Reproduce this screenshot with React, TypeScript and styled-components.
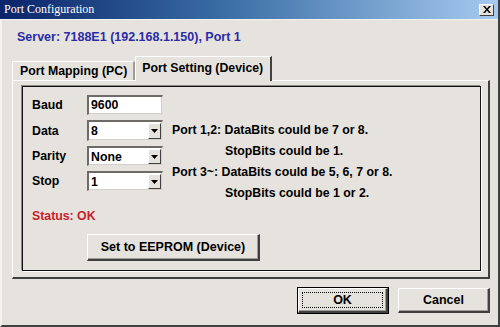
import styled, { createGlobalStyle } from "styled-components";

const GlobalStyle = createGlobalStyle`
  html, body {
    margin: 0;
    padding: 0;
    background: #e6e3de;
  }
  * {
    box-sizing: border-box;
  }
`;

const App = () => {
  return (
    <>
      <GlobalStyle />
      <Window>
        <TitleBar>
          <Title>Port Configuration</Title>
          <CloseButton aria-label="Close">
            <svg width="8" height="7" viewBox="0 0 8 7">
              <path d="M0 0h2l2 2.5L6 0h2L5 3.5 8 7H6L4 4.5 2 7H0l3-3.5z" fill="#000" />
            </svg>
          </CloseButton>
        </TitleBar>
        <Body>
          <ServerLine>Server: 7188E1 (192.168.1.150), Port 1</ServerLine>
          <TabStrip>
            <Tab>Port Mapping (PC)</Tab>
            <Tab $active>Port Setting (Device)</Tab>
          </TabStrip>
          <TabPanel>
            <GroupBox>
              <FormRow>
                <Fields>
                  <Label>Baud</Label>
                  <TextBox>9600</TextBox>
                  <Label>Data</Label>
                  <Combo>
                    <ComboValue>8</ComboValue>
                    <ComboArrow>
                      <svg width="7" height="4" viewBox="0 0 7 4">
                        <path d="M0 0h7L3.5 4z" fill="#000" />
                      </svg>
                    </ComboArrow>
                  </Combo>
                  <Label>Parity</Label>
                  <Combo>
                    <ComboValue>None</ComboValue>
                    <ComboArrow>
                      <svg width="7" height="4" viewBox="0 0 7 4">
                        <path d="M0 0h7L3.5 4z" fill="#000" />
                      </svg>
                    </ComboArrow>
                  </Combo>
                  <Label>Stop</Label>
                  <Combo>
                    <ComboValue>1</ComboValue>
                    <ComboArrow>
                      <svg width="7" height="4" viewBox="0 0 7 4">
                        <path d="M0 0h7L3.5 4z" fill="#000" />
                      </svg>
                    </ComboArrow>
                  </Combo>
                </Fields>
                <Notes>
                  <NoteLine>Port 1,2: DataBits could be 7 or 8.</NoteLine>
                  <NoteLine $indent>StopBits could be 1.</NoteLine>
                  <NoteLine>Port 3~: DataBits could be 5, 6, 7 or 8.</NoteLine>
                  <NoteLine $indent>StopBits could be 1 or 2.</NoteLine>
                </Notes>
              </FormRow>
              <Status>Status: OK</Status>
              <EepromButton>Set to EEPROM (Device)</EepromButton>
            </GroupBox>
          </TabPanel>
          <Footer>
            <DialogButton $default $width={90}>
              <FocusRing>OK</FocusRing>
            </DialogButton>
            <DialogButton $width={92}>Cancel</DialogButton>
          </Footer>
        </Body>
      </Window>
    </>
  );
};

const Window = styled.div`
  width: 500px;
  height: 327px;
  display: flex;
  flex-direction: column;
  background: #e6e3de;
  border-left: 2px solid #f4f2ee;
  border-right: 2px solid #404040;
  border-bottom: 2px solid #404040;
  font-family: "Liberation Sans", Arial, sans-serif;
  font-weight: bold;
  font-size: 12px;
  color: #000;
`;

const TitleBar = styled.div`
  height: 20px;
  margin-left: -2px;
  padding: 0 4px 0 4px;
  display: flex;
  align-items: center;
  justify-content: space-between;
  background: linear-gradient(90deg, #0a246a 0%, #3a6ea5 45%, #a6caf0 100%);
  border-bottom: 1px solid #f4f2ee;
`;

const Title = styled.span`
  font-family: "Liberation Serif", "Times New Roman", serif;
  font-weight: normal;
  font-size: 12px;
  color: #ffffff;
`;

const CloseButton = styled.div`
  width: 15px;
  height: 12px;
  display: flex;
  align-items: center;
  justify-content: center;
  background: #e6e3de;
  border-top: 1px solid #ffffff;
  border-left: 1px solid #ffffff;
  border-right: 1px solid #404040;
  border-bottom: 1px solid #404040;
`;

const Body = styled.div`
  flex: 1;
  display: flex;
  flex-direction: column;
  padding: 10px 8px 0 10px;
`;

const ServerLine = styled.div`
  padding-left: 5px;
  color: #2b2ba8;
  font-size: 12.5px;
  line-height: 15px;
`;

const TabStrip = styled.div`
  margin-top: 10px;
  height: 25px;
  display: flex;
  align-items: flex-end;
  position: relative;
  z-index: 1;
`;

const Tab = styled.div<{ $active?: boolean }>`
  height: ${(p) => (p.$active ? "25px" : "19px")};
  margin-bottom: ${(p) => (p.$active ? "-1px" : "0")};
  padding: ${(p) => (p.$active ? "0 7px 0 6px" : "0 6px 0 7px")};
  display: flex;
  align-items: ${(p) => (p.$active ? "flex-start" : "center")};
  padding-top: ${(p) => (p.$active ? "4px" : "0")};
  background: #e6e3de;
  border-top: 1px solid #ffffff;
  border-left: 1px solid #ffffff;
  border-right: 2px solid ${(p) => (p.$active ? "#404040" : "#a09d98")};
  font-size: 12.3px;
  white-space: nowrap;
`;

const TabPanel = styled.div`
  width: 478px;
  height: 199px;
  padding: 5px 7px 7px 9px;
  border-top: 1px solid #ffffff;
  border-left: 1px solid #ffffff;
  border-right: 2px solid #404040;
  border-bottom: 2px solid #404040;
`;

const GroupBox = styled.div`
  height: 185px;
  padding: 8px 10px 0 9px;
  border: 1px solid #111;
  box-shadow: -1px -1px 0 #8c8984, 1px 1px 0 #ffffff;
  display: flex;
  flex-direction: column;
  align-items: flex-start;
`;

const FormRow = styled.div`
  display: flex;
  align-items: flex-start;
`;

const Fields = styled.div`
  display: grid;
  grid-template-columns: 55px 76px;
  grid-template-rows: 20px 21px 20px 20px;
  row-gap: 5px;
  align-items: center;
`;

const Label = styled.div`
  font-size: 12.3px;
`;

const SunkenField = styled.div`
  height: 100%;
  background: #ffffff;
  border-top: 2px solid #6e6b66;
  border-left: 2px solid #6e6b66;
  border-right: 1px solid #e6e3de;
  border-bottom: 1px solid #e6e3de;
  box-shadow: inset -1px -1px 0 #d4d0c8;
  font-size: 12.3px;
`;

const TextBox = styled(SunkenField)`
  padding: 1px 0 0 2px;
`;

const Combo = styled(SunkenField)`
  display: flex;
  align-items: stretch;
`;

const ComboValue = styled.div`
  flex: 1;
  padding: 2px 0 0 2px;
`;

const ComboArrow = styled.div`
  width: 13px;
  margin: 1px 1px 1px 0;
  display: flex;
  align-items: center;
  justify-content: center;
  background: #e6e3de;
  border-top: 1px solid #ffffff;
  border-left: 1px solid #ffffff;
  border-right: 1px solid #404040;
  border-bottom: 1px solid #404040;
`;

const Notes = styled.div`
  margin-top: 25px;
  margin-left: 9px;
  display: flex;
  flex-direction: column;
`;

const NoteLine = styled.div<{ $indent?: boolean }>`
  height: 21px;
  line-height: 21px;
  padding-left: ${(p) => (p.$indent ? "53px" : "0")};
  font-size: 12.3px;
  white-space: nowrap;
`;

const Status = styled.div`
  margin-top: 5px;
  color: #c8202a;
  font-size: 12.3px;
`;

const RaisedButton = styled.div`
  display: flex;
  align-items: center;
  justify-content: center;
  background: #e6e3de;
  border-top: 1px solid #ffffff;
  border-left: 1px solid #ffffff;
  border-right: 2px solid #404040;
  border-bottom: 2px solid #404040;
  box-shadow: inset -1px -1px 0 #a09d98;
  font-size: 12.5px;
`;

const EepromButton = styled(RaisedButton)`
  margin-top: 11px;
  margin-left: 55px;
  width: 173px;
  height: 27px;
`;

const Footer = styled.div`
  display: flex;
  justify-content: flex-end;
  gap: 10px;
  padding: 9px 0 0 0;
`;

const DialogButton = styled(RaisedButton)<{ $default?: boolean; $width: number }>`
  width: ${(p) => p.$width}px;
  height: 25px;
  outline: ${(p) => (p.$default ? "1px solid #000" : "none")};
`;

const FocusRing = styled.div`
  width: calc(100% - 6px);
  height: calc(100% - 6px);
  display: flex;
  align-items: center;
  justify-content: center;
  border: 1px dotted #000;
`;

export default App;
